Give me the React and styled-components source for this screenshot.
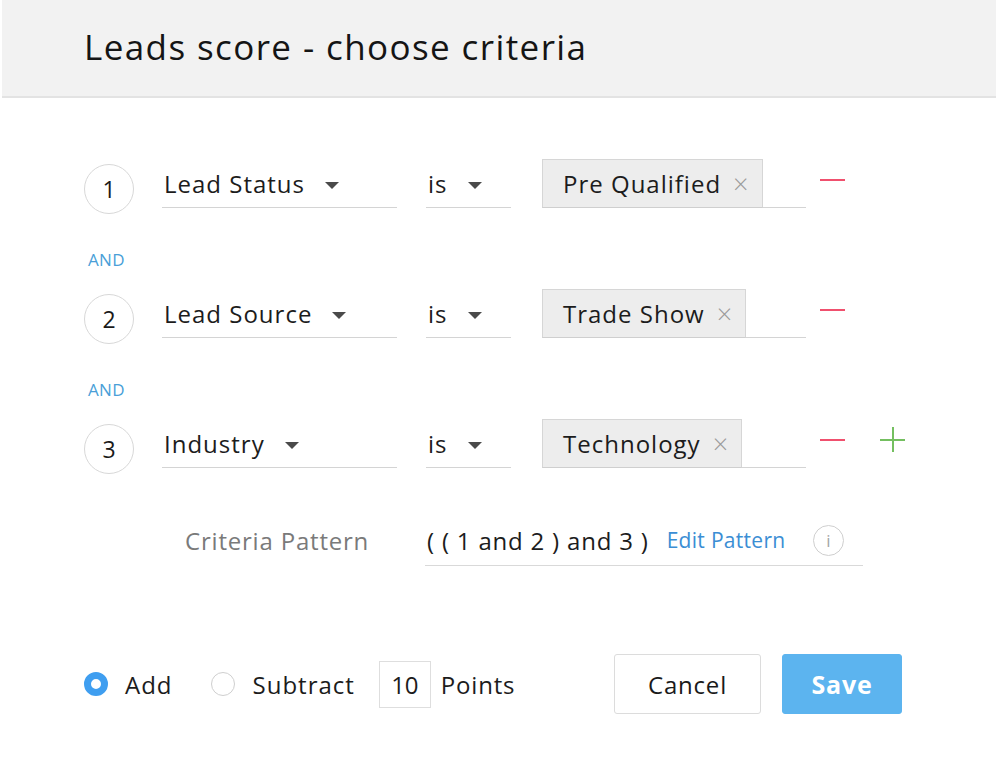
import React from 'react'
import styled, { createGlobalStyle } from 'styled-components'

const GlobalStyle = createGlobalStyle`
  body {
    margin: 0;
    background: #ffffff;
    font-family: "Open Sans", Lato, "Liberation Sans", sans-serif;
    color: #1c1c1c;
    letter-spacing: 0.8px;
  }
`

const Page = styled.div`
  width: 998px;
  height: 762px;
  background: #fff;
  overflow: hidden;
`

const Header = styled.div`
  height: 98px;
  margin: 0 2px;
  background: #f2f2f2;
  border-bottom: 2px solid #e3e3e3;
  display: flex;
  align-items: center;
  padding-left: 82px;
  box-sizing: border-box;
`

const Title = styled.h1`
  margin: 0 0 4px;
  font-size: 35px;
  font-weight: 400;
  letter-spacing: 1.4px;
  color: #151515;
`

const Body = styled.div`
  padding: 61px 0 0 84px;
`

const Row = styled.div`
  display: flex;
  align-items: flex-start;
  height: 50px;
`

const Step = styled.div`
  width: 48px;
  height: 48px;
  margin-top: 5px;
  border: 1px solid #d8d8d8;
  border-radius: 50%;
  display: flex;
  align-items: center;
  justify-content: center;
  font-size: 23px;
  letter-spacing: 0;
  color: #1a1a1a;
  flex-shrink: 0;
`

const Field = styled.div`
  width: ${p => p.$w}px;
  margin-left: ${p => p.$ml}px;
  height: 49px;
  border-bottom: 1px solid #d4d4d4;
  display: flex;
  align-items: center;
  box-sizing: border-box;
  font-size: 24px;
  letter-spacing: 1px;
  padding-left: ${p => p.$pl ?? 2}px;
  flex-shrink: 0;
`

const Caret = styled.span`
  width: 0;
  height: 0;
  margin-left: 20px;
  margin-top: 4px;
  border-left: 7px solid transparent;
  border-right: 7px solid transparent;
  border-top: 7px solid #4a4a4a;
`

const Tag = styled.div`
  height: 49px;
  box-sizing: border-box;
  background: #ededed;
  border: 1px solid #d6d6d6;
  border-bottom-color: #cfcfcf;
  display: flex;
  align-items: center;
  padding: 0 12px 0 20px;
  font-size: 24px;
`

const Remove = styled.span`
  margin-left: 12px;
  font-size: 27px;
  font-weight: 300;
  color: #9a9a9a;
  line-height: 1;
`

const Action = styled.span`
  position: relative;
  width: 25px;
  height: 25px;
  margin-left: ${p => p.$ml}px;
  margin-top: 8px;
  flex-shrink: 0;
  &::before {
    content: '';
    position: absolute;
    left: 0;
    right: 0;
    top: 12px;
    height: 2px;
    background: ${p => p.$color};
  }
  &::after {
    content: '';
    display: ${p => (p.$plus ? 'block' : 'none')};
    position: absolute;
    top: 0;
    bottom: 0;
    left: 12px;
    width: 1.5px;
    background: ${p => p.$color};
  }
`

const And = styled.div`
  height: 80px;
  padding-top: 40px;
  box-sizing: border-box;
  margin-left: 4px;
  font-size: 17px;
  letter-spacing: 0.3px;
  line-height: 22px;
  color: #4a9fd8;
`

const PatternRow = styled.div`
  display: flex;
  align-items: flex-end;
  margin-top: 49px;
  height: 48px;
`

const PatternLabel = styled.div`
  width: 240px;
  padding-left: 101px;
  font-size: 24px;
  color: #7a7a7a;
  padding-bottom: 9px;
  flex-shrink: 0;
`

const PatternField = styled.div`
  width: 438px;
  height: 48px;
  box-sizing: border-box;
  border-bottom: 1px solid #d9d9d9;
  display: flex;
  align-items: center;
  padding: 0 0 3px 2px;
  font-size: 24px;
`

const EditLink = styled.a`
  margin-left: 18px;
  font-size: 21px;
  letter-spacing: 0.3px;
  color: #3b8ed4;
  text-decoration: none;
`

const Info = styled.span`
  width: 29px;
  height: 29px;
  margin-left: auto;
  margin-right: 19px;
  border: 1px solid #cfcfcf;
  border-radius: 50%;
  display: flex;
  align-items: center;
  justify-content: center;
  font-size: 17px;
  letter-spacing: 0;
  color: #a5a5a5;
`

const Footer = styled.div`
  display: flex;
  align-items: center;
  width: 818px;
  margin-top: 88px;
  height: 60px;
`

const Radio = styled.span`
  width: 24px;
  height: 24px;
  box-sizing: border-box;
  border-radius: 50%;
  border: ${p => (p.$on ? '7px solid #3f9ef0' : '1px solid #cfcfcf')};
  background: #fff;
  margin-left: ${p => p.$ml}px;
  flex-shrink: 0;
`

const RadioLabel = styled.span`
  margin-left: ${p => p.$ml}px;
  font-size: 24px;
  letter-spacing: 1px;
`

const PointsInput = styled.div`
  width: 52px;
  height: 47px;
  box-sizing: border-box;
  border: 1px solid #dedede;
  margin-left: 24px;
  display: flex;
  align-items: center;
  justify-content: center;
  font-size: 24px;
  letter-spacing: 0;
`

const Points = styled.span`
  margin-left: 10px;
  font-size: 24px;
`

const Buttons = styled.div`
  margin-left: auto;
  display: flex;
  gap: 21px;
`

const Button = styled.button`
  height: 60px;
  width: ${p => p.$w}px;
  border-radius: 3px;
  font-family: inherit;
  font-size: ${p => (p.$primary ? 25 : 24)}px;
  letter-spacing: 0.8px;
  cursor: pointer;
  border: 1px solid ${p => (p.$primary ? '#5cb4ef' : '#dcdcdc')};
  background: ${p => (p.$primary ? '#5cb4ef' : '#fff')};
  color: ${p => (p.$primary ? '#fff' : '#1a1a1a')};
  font-weight: ${p => (p.$primary ? 700 : 400)};
`

const rows = [
  { n: 1, field: 'Lead Status', value: 'Pre Qualified' },
  { n: 2, field: 'Lead Source', value: 'Trade Show' },
  { n: 3, field: 'Industry', value: 'Technology', last: true },
]

function CriteriaRow({ row }) {
  return (
    <Row>
      <Step>{row.n}</Step>
      <Field $w={235} $ml={28}>
        {row.field}
        <Caret />
      </Field>
      <Field $w={85} $ml={29}>
        is
        <Caret />
      </Field>
      <Field $w={264} $ml={31} $pl={0}>
        <Tag>
          {row.value}
          <Remove>×</Remove>
        </Tag>
      </Field>
      <Action $ml={14} $color="#f0506e" />
      {row.last && <Action $ml={35} $color="#74bf60" $plus />}
    </Row>
  )
}

export default function App() {
  return (
    <Page>
      <GlobalStyle />
      <Header>
        <Title>Leads score - choose criteria</Title>
      </Header>
      <Body>
        {rows.map((row, i) => (
          <React.Fragment key={row.n}>
            <CriteriaRow row={row} />
            {i < rows.length - 1 && <And>AND</And>}
          </React.Fragment>
        ))}
        <PatternRow>
          <PatternLabel>Criteria Pattern</PatternLabel>
          <PatternField>
            ( ( 1 and 2 ) and 3 )
            <EditLink>Edit Pattern</EditLink>
            <Info>i</Info>
          </PatternField>
        </PatternRow>
        <Footer>
          <Radio $on $ml={0} />
          <RadioLabel $ml={17}>Add</RadioLabel>
          <Radio $ml={38} />
          <RadioLabel $ml={18}>Subtract</RadioLabel>
          <PointsInput>10</PointsInput>
          <Points>Points</Points>
          <Buttons>
            <Button $w={147}>Cancel</Button>
            <Button $w={120} $primary>Save</Button>
          </Buttons>
        </Footer>
      </Body>
    </Page>
  )
}
